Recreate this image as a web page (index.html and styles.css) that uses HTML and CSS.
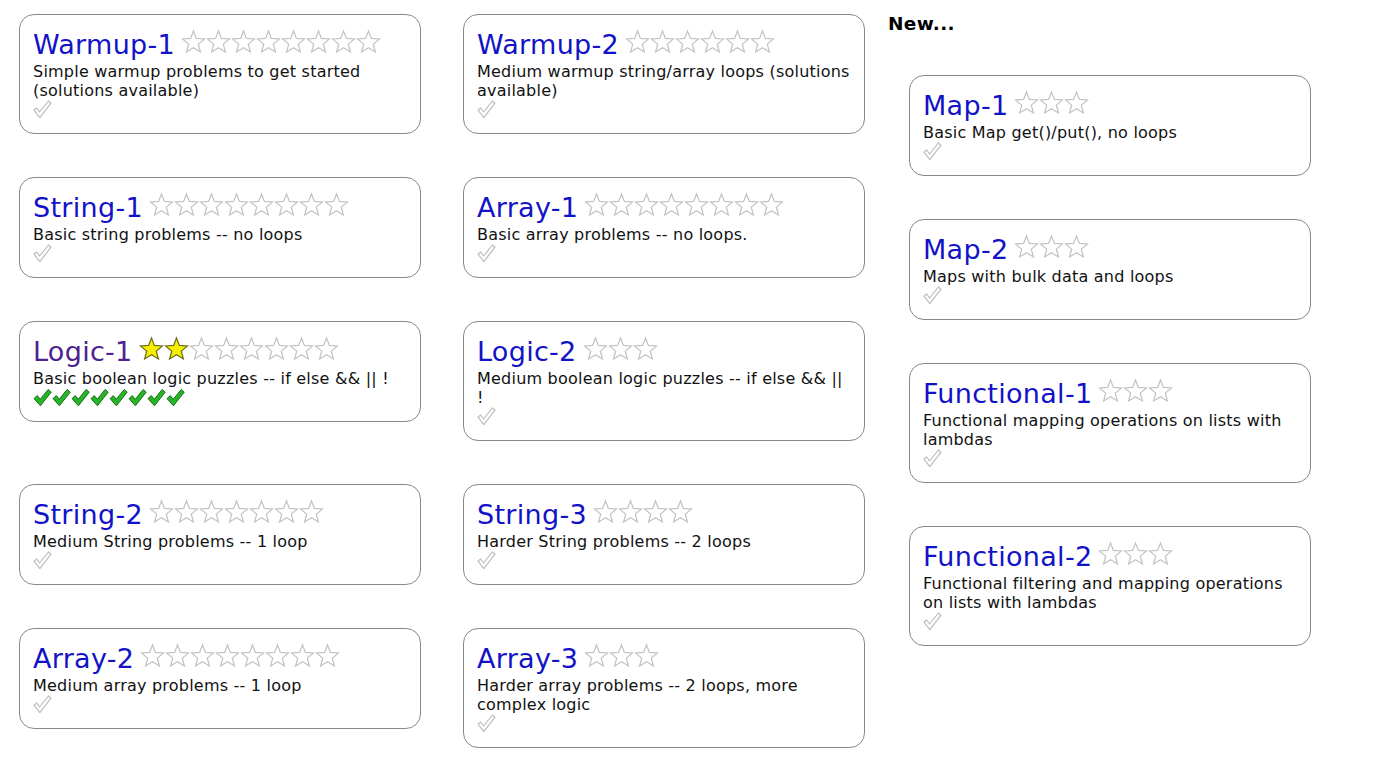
FILE: index.html
```html
<!DOCTYPE html>
<html>
<head>
<meta charset="utf-8">
<title>CodingBat Java</title>
<link rel="stylesheet" href="styles.css">
</head>
<body>
<div class="page">
  <div class="grid">
    <div class="summ">
      <div class="head"><a class="title" href="#">Warmup-1</a><span class="stars"><svg class="star"><use href="#s0"/></svg><svg class="star"><use href="#s0"/></svg><svg class="star"><use href="#s0"/></svg><svg class="star"><use href="#s0"/></svg><svg class="star"><use href="#s0"/></svg><svg class="star"><use href="#s0"/></svg><svg class="star"><use href="#s0"/></svg><svg class="star"><use href="#s0"/></svg></span></div>
      <div class="desc">Simple warmup problems to get started (solutions available)</div>
      <div class="checks"><svg class="chk"><use href="#c0"/></svg></div>
    </div>
    <div class="summ">
      <div class="head"><a class="title" href="#">Warmup-2</a><span class="stars"><svg class="star"><use href="#s0"/></svg><svg class="star"><use href="#s0"/></svg><svg class="star"><use href="#s0"/></svg><svg class="star"><use href="#s0"/></svg><svg class="star"><use href="#s0"/></svg><svg class="star"><use href="#s0"/></svg></span></div>
      <div class="desc">Medium warmup string/array loops (solutions available)</div>
      <div class="checks"><svg class="chk"><use href="#c0"/></svg></div>
    </div>
    <div class="summ">
      <div class="head"><a class="title" href="#">String-1</a><span class="stars"><svg class="star"><use href="#s0"/></svg><svg class="star"><use href="#s0"/></svg><svg class="star"><use href="#s0"/></svg><svg class="star"><use href="#s0"/></svg><svg class="star"><use href="#s0"/></svg><svg class="star"><use href="#s0"/></svg><svg class="star"><use href="#s0"/></svg><svg class="star"><use href="#s0"/></svg></span></div>
      <div class="desc">Basic string problems -- no loops</div>
      <div class="checks"><svg class="chk"><use href="#c0"/></svg></div>
    </div>
    <div class="summ">
      <div class="head"><a class="title" href="#">Array-1</a><span class="stars"><svg class="star"><use href="#s0"/></svg><svg class="star"><use href="#s0"/></svg><svg class="star"><use href="#s0"/></svg><svg class="star"><use href="#s0"/></svg><svg class="star"><use href="#s0"/></svg><svg class="star"><use href="#s0"/></svg><svg class="star"><use href="#s0"/></svg><svg class="star"><use href="#s0"/></svg></span></div>
      <div class="desc">Basic array problems -- no loops.</div>
      <div class="checks"><svg class="chk"><use href="#c0"/></svg></div>
    </div>
    <div class="summ">
      <div class="head"><a class="title visited" href="#">Logic-1</a><span class="stars"><svg class="star"><use href="#s1"/></svg><svg class="star"><use href="#s1"/></svg><svg class="star"><use href="#s0"/></svg><svg class="star"><use href="#s0"/></svg><svg class="star"><use href="#s0"/></svg><svg class="star"><use href="#s0"/></svg><svg class="star"><use href="#s0"/></svg><svg class="star"><use href="#s0"/></svg></span></div>
      <div class="desc">Basic boolean logic puzzles -- if else &amp;&amp; || !</div>
      <div class="checks"><svg class="chk"><use href="#c1"/></svg><svg class="chk"><use href="#c1"/></svg><svg class="chk"><use href="#c1"/></svg><svg class="chk"><use href="#c1"/></svg><svg class="chk"><use href="#c1"/></svg><svg class="chk"><use href="#c1"/></svg><svg class="chk"><use href="#c1"/></svg><svg class="chk"><use href="#c1"/></svg></div>
    </div>
    <div class="summ">
      <div class="head"><a class="title" href="#">Logic-2</a><span class="stars"><svg class="star"><use href="#s0"/></svg><svg class="star"><use href="#s0"/></svg><svg class="star"><use href="#s0"/></svg></span></div>
      <div class="desc">Medium boolean logic puzzles -- if else &amp;&amp; || !</div>
      <div class="checks"><svg class="chk"><use href="#c0"/></svg></div>
    </div>
    <div class="summ">
      <div class="head"><a class="title" href="#">String-2</a><span class="stars"><svg class="star"><use href="#s0"/></svg><svg class="star"><use href="#s0"/></svg><svg class="star"><use href="#s0"/></svg><svg class="star"><use href="#s0"/></svg><svg class="star"><use href="#s0"/></svg><svg class="star"><use href="#s0"/></svg><svg class="star"><use href="#s0"/></svg></span></div>
      <div class="desc">Medium String problems -- 1 loop</div>
      <div class="checks"><svg class="chk"><use href="#c0"/></svg></div>
    </div>
    <div class="summ">
      <div class="head"><a class="title" href="#">String-3</a><span class="stars"><svg class="star"><use href="#s0"/></svg><svg class="star"><use href="#s0"/></svg><svg class="star"><use href="#s0"/></svg><svg class="star"><use href="#s0"/></svg></span></div>
      <div class="desc">Harder String problems -- 2 loops</div>
      <div class="checks"><svg class="chk"><use href="#c0"/></svg></div>
    </div>
    <div class="summ">
      <div class="head"><a class="title" href="#">Array-2</a><span class="stars"><svg class="star"><use href="#s0"/></svg><svg class="star"><use href="#s0"/></svg><svg class="star"><use href="#s0"/></svg><svg class="star"><use href="#s0"/></svg><svg class="star"><use href="#s0"/></svg><svg class="star"><use href="#s0"/></svg><svg class="star"><use href="#s0"/></svg><svg class="star"><use href="#s0"/></svg></span></div>
      <div class="desc">Medium array problems -- 1 loop</div>
      <div class="checks"><svg class="chk"><use href="#c0"/></svg></div>
    </div>
    <div class="summ">
      <div class="head"><a class="title" href="#">Array-3</a><span class="stars"><svg class="star"><use href="#s0"/></svg><svg class="star"><use href="#s0"/></svg><svg class="star"><use href="#s0"/></svg></span></div>
      <div class="desc">Harder array problems -- 2 loops, more complex logic</div>
      <div class="checks"><svg class="chk"><use href="#c0"/></svg></div>
    </div>
  </div>

  <div class="newcol">
    <h2 class="newhead">New...</h2>
    <div class="newlist">
      <div class="summ">
        <div class="head"><a class="title" href="#">Map-1</a><span class="stars"><svg class="star"><use href="#s0"/></svg><svg class="star"><use href="#s0"/></svg><svg class="star"><use href="#s0"/></svg></span></div>
        <div class="desc">Basic Map get()/put(), no loops</div>
        <div class="checks"><svg class="chk"><use href="#c0"/></svg></div>
      </div>
      <div class="summ">
        <div class="head"><a class="title" href="#">Map-2</a><span class="stars"><svg class="star"><use href="#s0"/></svg><svg class="star"><use href="#s0"/></svg><svg class="star"><use href="#s0"/></svg></span></div>
        <div class="desc">Maps with bulk data and loops</div>
        <div class="checks"><svg class="chk"><use href="#c0"/></svg></div>
      </div>
      <div class="summ">
        <div class="head"><a class="title" href="#">Functional-1</a><span class="stars"><svg class="star"><use href="#s0"/></svg><svg class="star"><use href="#s0"/></svg><svg class="star"><use href="#s0"/></svg></span></div>
        <div class="desc">Functional mapping operations on lists with lambdas</div>
        <div class="checks"><svg class="chk"><use href="#c0"/></svg></div>
      </div>
      <div class="summ">
        <div class="head"><a class="title" href="#">Functional-2</a><span class="stars"><svg class="star"><use href="#s0"/></svg><svg class="star"><use href="#s0"/></svg><svg class="star"><use href="#s0"/></svg></span></div>
        <div class="desc">Functional filtering and mapping operations on lists with lambdas</div>
        <div class="checks"><svg class="chk"><use href="#c0"/></svg></div>
      </div>
    </div>
  </div>
</div>

<svg class="defs" width="0" height="0" aria-hidden="true">
  <defs>
    <symbol id="s0" viewBox="0 0 25 25">
      <polygon points="12.5,2 15.4,9.4 23.5,10 17.3,15.1 19.4,23 12.5,18.7 5.6,23 7.7,15.1 1.5,10 9.6,9.4" fill="#ffffff" stroke="#c2c2c2" stroke-width="1.2" stroke-linejoin="miter"/>
    </symbol>
    <symbol id="s1" viewBox="0 0 25 25">
      <polygon points="12.5,2 15.4,9.4 23.5,10 17.3,15.1 19.4,23 12.5,18.7 5.6,23 7.7,15.1 1.5,10 9.6,9.4" fill="#f6f000" stroke="#6e6a1e" stroke-width="1.2" stroke-linejoin="miter"/>
    </symbol>
    <symbol id="c0" viewBox="0 0 19 19">
      <path d="M1 10.2 L3.6 8 L6.6 12 L15.4 1 L18 3.2 L6.8 17.6 Z" fill="#ffffff" stroke="#bdbdbd" stroke-width="1.2" stroke-linejoin="round"/>
    </symbol>
    <symbol id="c1" viewBox="0 0 19 19">
      <path d="M1 10.6 L4.3 7.6 L7.2 11.3 L15.2 1.4 L18.2 4.2 L7.4 17.8 Z" fill="#27b527" stroke="#1b6e1b" stroke-width="1" stroke-linejoin="round"/>
    </symbol>
  </defs>
</svg>
</body>
</html>
```

FILE: styles.css
```css
html, body {
  margin: 0;
  padding: 0;
  background: #ffffff;
}

body {
  font-family: "DejaVu Sans", Verdana, sans-serif;
  color: #000000;
}

.page {
  display: flex;
  align-items: flex-start;
  padding: 14px 0 0 19px;
}

.grid {
  display: grid;
  grid-template-columns: 402px 402px;
  column-gap: 42px;
  row-gap: 43px;
  align-items: start;
}

.newcol {
  margin-left: 23px;
}

.newhead {
  margin: 0 0 42px 0;
  font-size: 18.5px;
  line-height: 19px;
  font-weight: bold;
  letter-spacing: 0.3px;
}

.newlist {
  display: flex;
  flex-direction: column;
  gap: 43px;
  margin-left: 21px;
  width: 402px;
}

.summ {
  box-sizing: border-box;
  width: 402px;
  border: 1px solid #888888;
  border-radius: 15px;
  padding: 13px 13px 14px 13px;
  background: #ffffff;
}

.head {
  font-size: 27px;
  line-height: 34px;
  letter-spacing: 0.3px;
  white-space: nowrap;
}

.title {
  color: #1212c8;
  text-decoration: none;
}

.title.visited {
  color: #4f2190;
}

.stars {
  margin-left: 6px;
  letter-spacing: 0;
}

.star {
  width: 25px;
  height: 25px;
  vertical-align: baseline;
}

.desc {
  font-size: 16px;
  line-height: 19px;
  letter-spacing: 0.22px;
  color: #111111;
}

.checks {
  height: 19px;
  display: flex;
}

.chk {
  width: 19px;
  height: 19px;
  display: block;
}

.defs {
  display: block;
  width: 0;
  height: 0;
  overflow: hidden;
}
```
